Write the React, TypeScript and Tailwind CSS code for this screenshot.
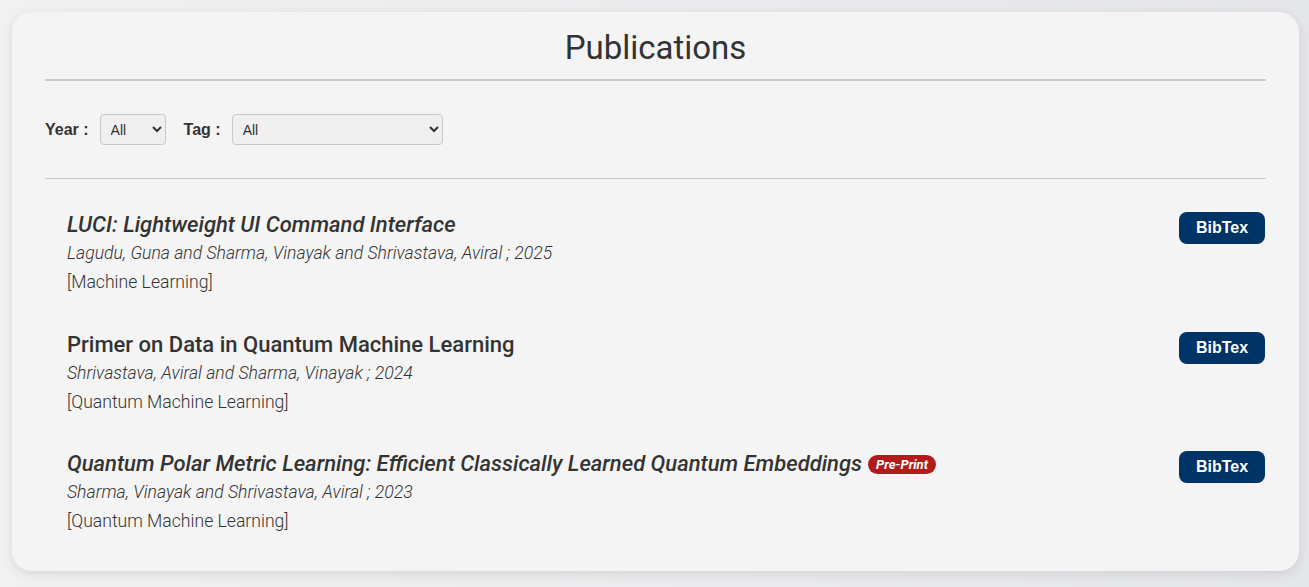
import React from "react";

type Pub = {
  title: string;
  italic: boolean;
  authors: string;
  year: number;
  tag: string;
  preprint?: boolean;
  space: string;
};

const pubs: Pub[] = [
  {
    title: "LUCI: Lightweight UI Command Interface",
    italic: true,
    authors: "Lagudu, Guna and Sharma, Vinayak and Shrivastava, Aviral",
    year: 2025,
    tag: "Machine Learning",
    space: "mt-0",
  },
  {
    title: "Primer on Data in Quantum Machine Learning",
    italic: false,
    authors: "Shrivastava, Aviral and Sharma, Vinayak",
    year: 2024,
    tag: "Quantum Machine Learning",
    space: "mt-[34px]",
  },
  {
    title: "Quantum Polar Metric Learning: Efficient Classically Learned Quantum Embeddings",
    italic: true,
    authors: "Sharma, Vinayak and Shrivastava, Aviral",
    year: 2023,
    tag: "Quantum Machine Learning",
    preprint: true,
    space: "mt-[33px]",
  },
];

export default function App() {
  return (
    <div className="min-h-[587px] w-full bg-gradient-to-r from-[#f1f1f1] to-[#e5e6e9] pt-3 pl-3 pr-[10px] font-['Roboto',sans-serif] text-[#333]">
      <div className="rounded-[20px] bg-[#f4f4f4] px-[33px] pt-4 pb-[35px] shadow-[0_3px_12px_rgba(0,0,0,0.1)]">
        <h1 className="text-center text-[33px] leading-[40px] font-normal text-[#333]">Publications</h1>
        <div className="mt-[11px] h-[2px] bg-[#cbcbcb]" />
        <div className="mt-[33px] flex items-center font-['Liberation_Sans',Arial,sans-serif]">
          <label className="text-[16px] font-bold text-[#333]">Year :</label>
          <select className="ml-[11px] h-[31px] w-[66px] rounded-[4px] border border-[#c8c8c8] bg-[#efefef] pl-[6px] text-[14px] text-[#333]">
            <option>All</option>
          </select>
          <label className="ml-[18px] text-[16px] font-bold text-[#333]">Tag :</label>
          <select className="ml-[11px] h-[31px] w-[211px] rounded-[4px] border border-[#c8c8c8] bg-[#efefef] pl-[6px] text-[14px] text-[#333]">
            <option>All</option>
          </select>
        </div>
        <div className="mt-[33px] h-px bg-[#c8c8c8]" />
        <div className="mt-[32px] flex flex-col pl-[22px] pr-px">
          {pubs.map((p) => (
            <div key={p.title} className={`flex items-start justify-between ${p.space}`}>
              <div>
                <h3
                  className={`flex items-center text-[22px] leading-[28px] font-medium text-[#333] ${
                    p.italic ? "italic" : ""
                  }`}
                >
                  <span>{p.title}</span>
                  {p.preprint && (
                    <span className="ml-[6px] rounded-full bg-[#b01c1c] px-[8px] text-[13px] leading-[19px] font-bold italic text-white">
                      Pre-Print
                    </span>
                  )}
                </h3>
                <p className="text-[17.6px] leading-[28px] font-light italic text-[#333]">
                  {p.authors} ; {p.year}
                </p>
                <p className="text-[17.6px] leading-[30px] font-light text-[#333]">[{p.tag}]</p>
              </div>
              <button className="mt-px h-[32px] w-[86px] shrink-0 rounded-[8px] bg-[#003366] font-['Liberation_Sans',Arial,sans-serif] text-[16px] font-bold text-white">
                BibTex
              </button>
            </div>
          ))}
        </div>
      </div>
    </div>
  );
}
